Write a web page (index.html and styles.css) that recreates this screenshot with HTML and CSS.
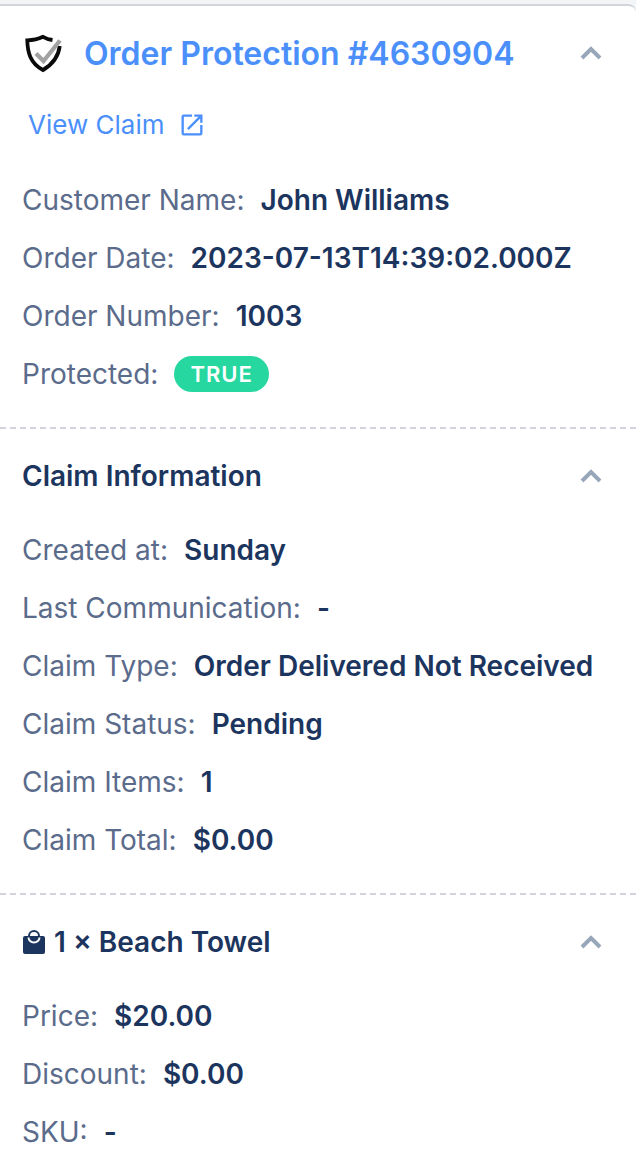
FILE: index.html
```
<!DOCTYPE html>
<html lang="en">
<head>
  <meta charset="UTF-8">
  <meta name="viewport" content="width=device-width, initial-scale=1.0">
  <title>Order Protection</title>
  <link rel="stylesheet" href="styles.css">
</head>
<body>
  <main class="card">
    <section class="section">
      <header class="section-head">
        <svg class="shield" viewBox="0 0 40 40" aria-hidden="true">
          <path d="M30.500 7C27 6.500 24 5.500 21 3.800 16.500 6 12 7.300 5.300 7.300 5.500 19 8 30 21 37 31 31 36.500 24 37.700 13" fill="none" stroke="#0a0a0a" stroke-width="3.800"/>
          <path d="M14 20.500l7.500 7.500L38 7.500" fill="none" stroke="#a2a2a2" stroke-width="4.200"/>
        </svg>
        <h1><a href="#">Order Protection #4630904</a></h1>
        <button class="toggle" type="button" aria-label="Collapse order">
          <svg viewBox="0 0 22 14" aria-hidden="true"><path d="M2 12l9-9 9 9"/></svg>
        </button>
      </header>
      <a class="claim-link" href="#">View Claim
        <svg viewBox="0 0 24 24" aria-hidden="true"><path d="M19 19H5V5h7V3H5a2 2 0 0 0-2 2v14a2 2 0 0 0 2 2h14a2 2 0 0 0 2-2v-7h-2v7zM14 3v2h3.590l-9.830 9.830 1.410 1.410L19 6.410V10h2V3h-7z"/></svg>
      </a>
      <dl class="fields">
        <div><dt>Customer Name:</dt><dd>John Williams</dd></div>
        <div><dt>Order Date:</dt><dd>2023-07-13T14:39:02.000Z</dd></div>
        <div><dt>Order Number:</dt><dd>1003</dd></div>
        <div><dt>Protected:</dt><dd class="badge">TRUE</dd></div>
      </dl>
    </section>

    <section class="section">
      <header class="section-head">
        <h2>Claim Information</h2>
        <button class="toggle" type="button" aria-label="Collapse claim information">
          <svg viewBox="0 0 22 14" aria-hidden="true"><path d="M2 12l9-9 9 9"/></svg>
        </button>
      </header>
      <dl class="fields">
        <div><dt>Created at:</dt><dd>Sunday</dd></div>
        <div><dt>Last Communication:</dt><dd>-</dd></div>
        <div><dt>Claim Type:</dt><dd>Order Delivered Not Received</dd></div>
        <div><dt>Claim Status:</dt><dd>Pending</dd></div>
        <div><dt>Claim Items:</dt><dd>1</dd></div>
        <div><dt>Claim Total:</dt><dd>$0.00</dd></div>
      </dl>
    </section>

    <section class="section">
      <header class="section-head">
        <svg class="bag" viewBox="0 0 24 26" aria-hidden="true">
          <path d="M3 7h18a2 2 0 0 1 2 2v14a2 2 0 0 1-2 2H3a2 2 0 0 1-2-2V9a2 2 0 0 1 2-2z" fill="#1c355e"/>
          <path d="M7 8V7a5 5 0 0 1 10 0v1" fill="none" stroke="#1c355e" stroke-width="2"/>
          <path d="M6.500 8.500a5.500 5 0 0 0 11 0" fill="none" stroke="#fff" stroke-width="2"/>
        </svg>
        <h2>1 × Beach Towel</h2>
        <button class="toggle" type="button" aria-label="Collapse item">
          <svg viewBox="0 0 22 14" aria-hidden="true"><path d="M2 12l9-9 9 9"/></svg>
        </button>
      </header>
      <dl class="fields">
        <div><dt>Price:</dt><dd>$20.00</dd></div>
        <div><dt>Discount:</dt><dd>$0.00</dd></div>
        <div><dt>SKU:</dt><dd>-</dd></div>
      </dl>
    </section>
  </main>
</body>
</html>
```
FILE: styles.css
```
* {
  box-sizing: border-box;
}
body {
  margin: 0;
  padding-top: 4px;
  background: #f3f4f6;
  font-family: Inter, sans-serif;
  font-size: 28px;
  color: #1c355e;
}
.card {
  background: #fff;
  border-top: 2px solid #d1d5db;
  border-top-right-radius: 8px;
}
.section {
  padding: 18px 22px 24px;
}
.section + .section {
  border-top: 2px dashed #d1d5db;
}
.section-head {
  display: flex;
  align-items: center;
  min-height: 58px;
}
h1, h2 {
  margin: 0;
  font-weight: 600;
}
h1 {
  font-size: 32px;
  margin-left: 22px;
}
h2 {
  font-size: 28px;
}
a {
  color: #4b8ffb;
  text-decoration: none;
}
.toggle {
  margin-left: auto;
  padding: 12px;
  border: none;
  background: none;
  cursor: pointer;
}
.toggle svg {
  display: block;
  width: 22px;
  height: 14px;
  fill: none;
  stroke: #97a6b8;
  stroke-width: 4;
}
.shield {
  width: 40px;
  height: 40px;
}
.bag {
  width: 24px;
  height: 26px;
  margin-right: 8px;
}
.claim-link {
  display: inline-flex;
  align-items: center;
  gap: 14px;
  margin-top: 13px;
  padding: 0 6px;
  font-size: 26px;
  line-height: 60px;
}
.claim-link svg {
  width: 28px;
  height: 28px;
  fill: #4b8ffb;
}
.fields {
  margin: 16px 0 0;
}
.fields div {
  display: flex;
  align-items: center;
  gap: 16px;
  height: 58px;
}
dt {
  color: #5b6b8b;
}
dd {
  margin: 0;
  font-weight: 600;
}
.badge {
  padding: 0 16px;
  border-radius: 18px;
  background: #26d7a0;
  color: #fff;
  font-size: 22px;
  letter-spacing: 1px;
  line-height: 36px;
}
```
